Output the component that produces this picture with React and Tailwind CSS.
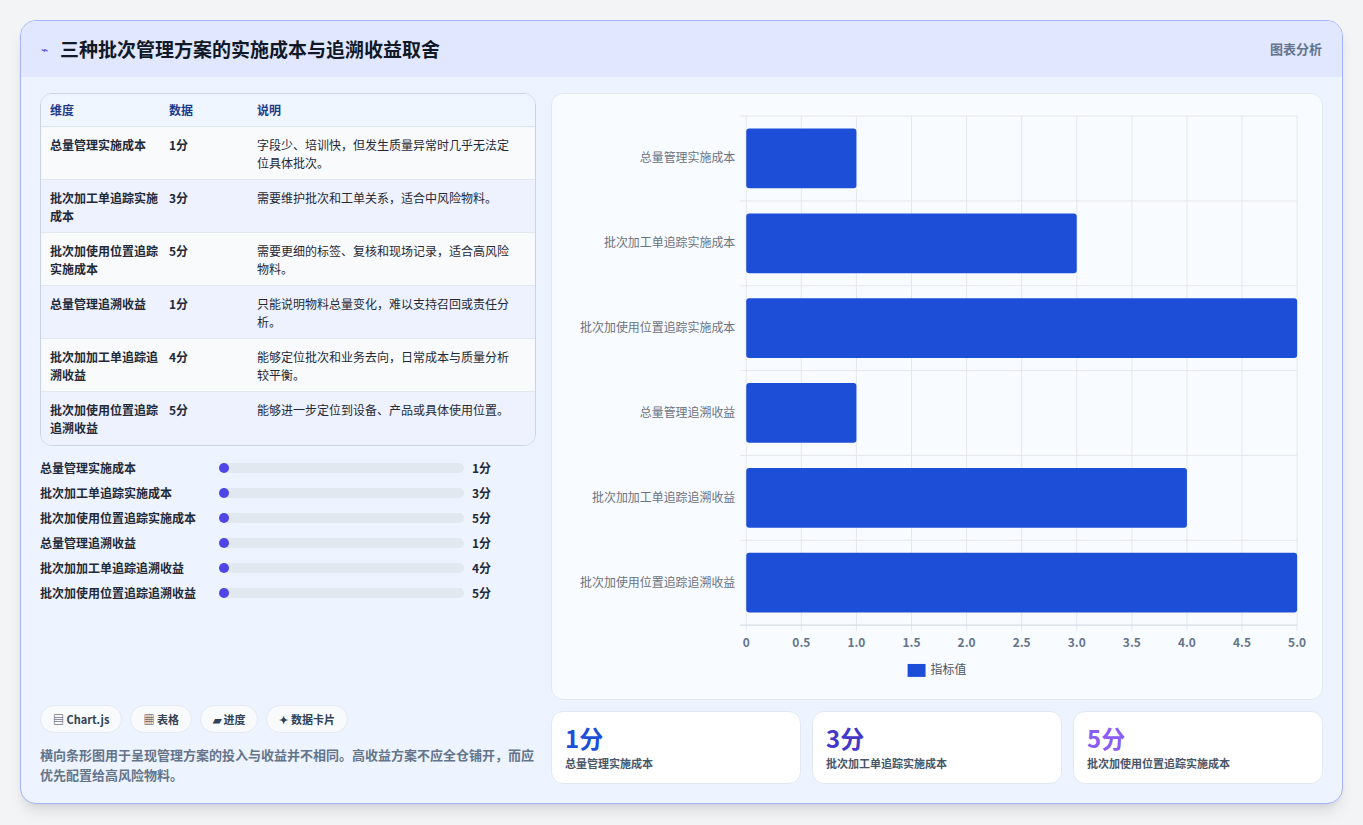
import React from "react";

const rows = [
  ["总量管理实施成本", "1分", "字段少、培训快，但发生质量异常时几乎无法定位具体批次。"],
  ["批次加工单追踪实施成本", "3分", "需要维护批次和工单关系，适合中风险物料。"],
  ["批次加使用位置追踪实施成本", "5分", "需要更细的标签、复核和现场记录，适合高风险物料。"],
  ["总量管理追溯收益", "1分", "只能说明物料总量变化，难以支持召回或责任分析。"],
  ["批次加加工单追踪追溯收益", "4分", "能够定位批次和业务去向，日常成本与质量分析较平衡。"],
  ["批次加使用位置追踪追溯收益", "5分", "能够进一步定位到设备、产品或具体使用位置。"],
];
const values = [1, 3, 5, 1, 4, 5];
const font = { fontFamily: '"Noto Sans CJK SC", "Noto Sans", sans-serif' };

const Chart = () => {
  const L = 195, R = 748, T = 22, B = 533;
  const band = (B - T) / 6;
  const unit = (R - L) / 5;
  return (
    <svg viewBox="0 0 773 607" className="w-full h-full">
      {Array.from({ length: 11 }).map((_, i) => (
        <line key={i} x1={L + i * unit / 2} x2={L + i * unit / 2} y1={T} y2={B + 6} stroke="#e5e7eb" />
      ))}
      {Array.from({ length: 7 }).map((_, i) => (
        <line key={i} x1={L - 6} x2={R} y1={T + i * band} y2={T + i * band} stroke={i === 6 ? "#cbd5e1" : "#e5e7eb"} />
      ))}
      {values.map((v, i) => (
        <g key={i}>
          <rect x={L} y={T + i * band + 12.5} width={v * unit} height={60} rx="3" fill="#1d4ed8" />
          <text x={L - 11} y={T + i * band + band / 2 + 4} textAnchor="end" fontSize="12" fill="#6b7280">{rows[i][0]}</text>
        </g>
      ))}
      {["0", "0.5", "1.0", "1.5", "2.0", "2.5", "3.0", "3.5", "4.0", "4.5", "5.0"].map((t, i) => (
        <text key={t} x={L + i * unit / 2} y={555} textAnchor="middle" fontSize="12" fontWeight="600" fill="#64748b">{t}</text>
      ))}
      <rect x="357" y="572" width="18" height="13" fill="#1d4ed8" />
      <text x="380" y="582" fontSize="12" fill="#4b5563">指标值</text>
    </svg>
  );
};

export default function App() {
  return (
    <div className="w-[1363px] h-[825px] bg-[#f3f4f6] p-5" style={font}>
      <div className="h-[784px] rounded-2xl border border-[#a5b4fc] bg-[#eef4ff] overflow-hidden shadow-lg flex flex-col">
        <div className="h-[56px] shrink-0 bg-[#e0e7ff] flex items-center justify-between px-5">
          <div className="flex items-center gap-3">
            <span className="text-[#4f46e5] text-xs">⌁</span>
            <h1 className="text-[19px] font-bold text-[#111827]">三种批次管理方案的实施成本与追溯收益取舍</h1>
          </div>
          <span className="text-[13px] font-semibold text-[#64748b]">图表分析</span>
        </div>
        <div className="flex-1 flex gap-[15px] px-[19px] pt-4 pb-[18px]">
          <div className="w-[496px] flex flex-col">
            <div className="rounded-xl border border-[#cbd5e1] bg-[#f8fafc] overflow-hidden text-[12px]">
              <div className="grid grid-cols-[119px_88px_1fr] h-[33px] items-center px-[9px] bg-[#eff6ff] border-b border-[#dbe3ee] text-[#1e3a8a] font-semibold">
                <span>维度</span><span>数据</span><span>说明</span>
              </div>
              {rows.map((r, i) => (
                <div key={i} className={`grid grid-cols-[119px_88px_1fr] h-[53px] pt-[9px] px-[9px] leading-[18px] text-[#1f2937] ${i < 5 ? "border-b border-[#e2e8f0]" : ""} ${i % 2 ? "bg-[#eef2ff]" : "bg-[#f8fafc]"}`}>
                  <span className="font-semibold pr-2">{r[0]}</span>
                  <span className="font-semibold">{r[1]}</span>
                  <span className="pr-2">{r[2]}</span>
                </div>
              ))}
            </div>
            <div className="mt-[13px] flex flex-col gap-[7px]">
              {rows.map((r, i) => (
                <div key={i} className="flex items-center h-[18px] text-[12px] font-semibold text-[#1f2937]">
                  <span className="w-[179px]">{r[0]}</span>
                  <div className="w-[245px] h-[10px] rounded-full bg-[#e2e8f0] relative">
                    <div className="absolute left-0 top-0 w-[10px] h-[10px] rounded-full bg-[#4f46e5]" />
                  </div>
                  <span className="ml-[8px]">{r[1]}</span>
                </div>
              ))}
            </div>
            <div className="mt-auto flex gap-2 text-[11px] font-semibold text-[#334155]">
              <span className="px-3 h-[28px] flex items-center rounded-full bg-[#f8fafc] border border-[#e5eaf2]">▤ Chart.js</span>
              <span className="px-3 h-[28px] flex items-center rounded-full bg-[#f8fafc] border border-[#e5eaf2]">▦ 表格</span>
              <span className="px-3 h-[28px] flex items-center rounded-full bg-[#f8fafc] border border-[#e5eaf2]">▰ 进度</span>
              <span className="px-3 h-[28px] flex items-center rounded-full bg-[#f8fafc] border border-[#e5eaf2]">✦ 数据卡片</span>
            </div>
            <p className="mt-[12px] text-[13px] leading-[20px] font-semibold text-[#64748b]">
              横向条形图用于呈现管理方案的投入与收益并不相同。高收益方案不应全仓铺开，而应优先配置给高风险物料。
            </p>
          </div>
          <div className="flex-1 flex flex-col gap-[11px]">
            <div className="h-[607px] rounded-xl border border-[#e2e8f0] bg-[#f8fbff]">
              <Chart />
            </div>
            <div className="grid grid-cols-3 gap-[11px]">
              {[["1分", "text-[#1d4ed8]", rows[0][0]], ["3分", "text-[#4338ca]", rows[1][0]], ["5分", "text-[#8b5cf6]", rows[2][0]]].map(([v, c, l]) => (
                <div key={v} className="h-[73px] rounded-xl border border-[#e2e8f0] bg-white px-[13px] pt-[10px]">
                  <div className={`text-[24px] font-bold leading-[32px] ${c}`}>{v}</div>
                  <div className="text-[11px] text-[#475569] font-semibold mt-[1px]">{l}</div>
                </div>
              ))}
            </div>
          </div>
        </div>
      </div>
    </div>
  );
}
